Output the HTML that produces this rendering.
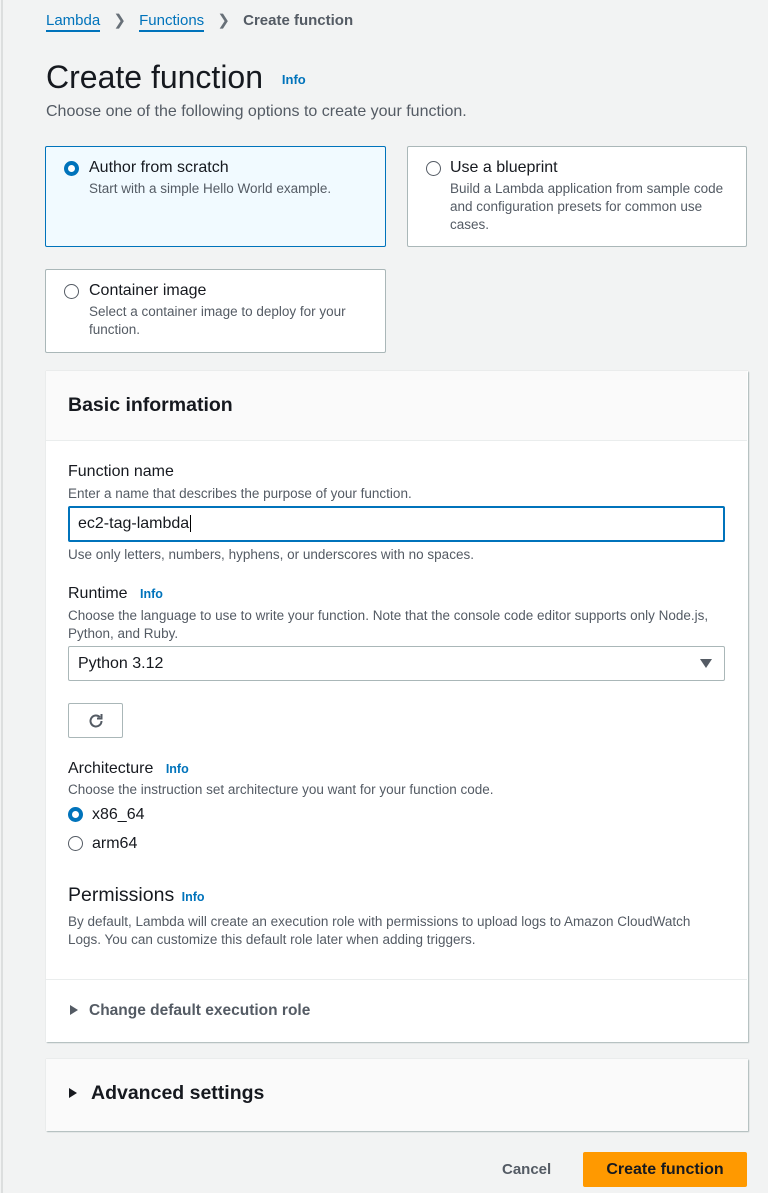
<!DOCTYPE html>
<html><head><meta charset="utf-8"><style>
*{margin:0;padding:0;box-sizing:border-box}
body{width:768px;height:1193px;background:#f2f3f3;font-family:"Liberation Sans",Arial,sans-serif;position:relative;overflow:hidden;color:#16191f}
.a{position:absolute;white-space:nowrap}
.lb{border-left:2px solid #dcdede;position:absolute;left:1px;top:0;height:1193px}
.link{color:#0073bb;text-decoration:none;border-bottom:2px solid #0073bb;padding-bottom:1px}
.info{color:#0073bb;font-weight:bold;font-size:12.5px}
.desc{color:#545b64;font-size:13.5px;line-height:18px}
.card{position:absolute;border:1px solid #aab7b8;border-radius:2px;background:#fff}
.radio{position:absolute;width:15px;height:15px;border-radius:50%;border:1.5px solid #545b64;background:#fff}
.radio.on{border:4.5px solid #0073bb}
.lab{font-size:16px;line-height:18px;color:#16191f}
</style></head><body>
<div class="lb"></div>
<div class="a" style="left:46px;top:12px;font-size:15px;line-height:18px">
<span class="link">Lambda</span>
<span style="color:#687078;margin:0 9px">&#x276F;</span>
<span class="link">Functions</span>
<span style="color:#687078;margin:0 9px">&#x276F;</span>
<span style="color:#545b64;font-weight:bold">Create function</span></div>
<div class="a" style="left:46px;top:59px;font-size:32px;line-height:36px;color:#16191f">Create function <span class="info" style="font-size:13px;margin-left:10px;vertical-align:4px">Info</span></div>
<div class="a" style="left:46px;top:103px;font-size:16px;line-height:18px;color:#545b64">Choose one of the following options to create your function.</div>

<div class="card" style="left:45px;top:146px;width:341px;height:101px;background:#f1faff;border-color:#0073bb"></div>
<div class="radio on" style="left:64px;top:161px"></div>
<div class="a lab" style="left:89px;top:159px">Author from scratch</div>
<div class="a desc" style="left:89px;top:180px">Start with a simple Hello World example.</div>

<div class="card" style="left:407px;top:146px;width:340px;height:101px"></div>
<div class="radio" style="left:426px;top:161px"></div>
<div class="a lab" style="left:450px;top:159px">Use a blueprint</div>
<div class="a desc" style="left:450px;top:180px">Build a Lambda application from sample code<br>and configuration presets for common use<br>cases.</div>

<div class="card" style="left:45px;top:269px;width:341px;height:84px"></div>
<div class="radio" style="left:64px;top:284px"></div>
<div class="a lab" style="left:89px;top:282px">Container image</div>
<div class="a desc" style="left:89px;top:303px">Select a container image to deploy for your<br>function.</div>

<div style="position:absolute;left:46px;top:371px;width:702px;height:671px;background:#fff;box-shadow:1px 1px 1px #aab7b8,0 0 1px #ccc"></div>
<div style="position:absolute;left:46px;top:371px;width:701px;height:70px;background:#fafafa;border-bottom:1px solid #eaeded"></div>
<div class="a" style="left:68px;top:394px;font-size:19.5px;line-height:22px;font-weight:bold">Basic information</div>

<div class="a lab" style="left:68px;top:463px">Function name</div>
<div class="a desc" style="left:68px;top:485px">Enter a name that describes the purpose of your function.</div>
<div style="position:absolute;left:68px;top:506px;width:657px;height:36px;border:2px solid #0073bb;border-radius:2px;background:#fff"></div>
<div class="a lab" style="left:78px;top:515px">ec2-tag-lambda<span style="border-left:1px solid #000;margin-left:1px"></span></div>
<div class="a desc" style="left:68px;top:546px">Use only letters, numbers, hyphens, or underscores with no spaces.</div>

<div class="a lab" style="left:68px;top:585px">Runtime <span class="info" style="margin-left:8px">Info</span></div>
<div class="a desc" style="left:68px;top:607px">Choose the language to use to write your function. Note that the console code editor supports only Node.js,<br>Python, and Ruby.</div>
<div style="position:absolute;left:68px;top:646px;width:657px;height:35px;border:1px solid #aab7b8;border-radius:2px;background:#fff"></div>
<div class="a lab" style="left:78px;top:655px">Python 3.12</div>
<div style="position:absolute;left:700px;top:659px;width:0;height:0;border-left:6px solid transparent;border-right:6px solid transparent;border-top:9px solid #545b64"></div>

<div style="position:absolute;left:68px;top:703px;width:55px;height:35px;border:1px solid #aab7b8;border-radius:2px;background:#fff"></div>
<svg style="position:absolute;left:86px;top:711px" width="20" height="20" viewBox="0 0 20 20"><path d="M15.5 10a5.5 5.5 0 1 1-1.6-3.9" fill="none" stroke="#545b64" stroke-width="2"/><path d="M15.5 3v4.5H11" fill="none" stroke="#545b64" stroke-width="2"/></svg>

<div class="a lab" style="left:68px;top:760px">Architecture <span class="info" style="margin-left:8px">Info</span></div>
<div class="a desc" style="left:68px;top:781px">Choose the instruction set architecture you want for your function code.</div>
<div class="radio on" style="left:68px;top:807px"></div>
<div class="a lab" style="left:92px;top:806px">x86_64</div>
<div class="radio" style="left:68px;top:836px"></div>
<div class="a lab" style="left:92px;top:835px">arm64</div>

<div class="a" style="left:68px;top:884px;font-size:19.5px;line-height:22px">Permissions <span class="info" style="margin-left:2px">Info</span></div>
<div class="a desc" style="left:68px;top:913px">By default, Lambda will create an execution role with permissions to upload logs to Amazon CloudWatch<br>Logs. You can customize this default role later when adding triggers.</div>
<div style="position:absolute;left:46px;top:979px;width:701px;border-top:1px solid #eaeded"></div>
<div style="position:absolute;left:70px;top:1005px;width:0;height:0;border-top:5px solid transparent;border-bottom:5px solid transparent;border-left:8px solid #545b64"></div>
<div class="a" style="left:89px;top:1002px;font-size:15.5px;line-height:18px;font-weight:bold;color:#545b64">Change default execution role</div>

<div style="position:absolute;left:46px;top:1059px;width:702px;height:72px;background:#fafafa;box-shadow:1px 1px 1px #aab7b8,0 0 1px #ccc"></div>
<div style="position:absolute;left:69px;top:1088px;width:0;height:0;border-top:5px solid transparent;border-bottom:5px solid transparent;border-left:8px solid #16191f"></div>
<div class="a" style="left:91px;top:1082px;font-size:19.5px;line-height:22px;font-weight:bold">Advanced settings</div>

<div class="a" style="left:502px;top:1161px;font-size:15px;line-height:18px;font-weight:bold;color:#545b64">Cancel</div>
<div style="position:absolute;left:583px;top:1152px;width:164px;height:35px;background:#ff9900;border-radius:2px"></div>
<div class="a" style="left:583px;top:1161px;width:164px;text-align:center;font-size:16px;line-height:18px;font-weight:bold;color:#16191f">Create function</div>
</body></html>
